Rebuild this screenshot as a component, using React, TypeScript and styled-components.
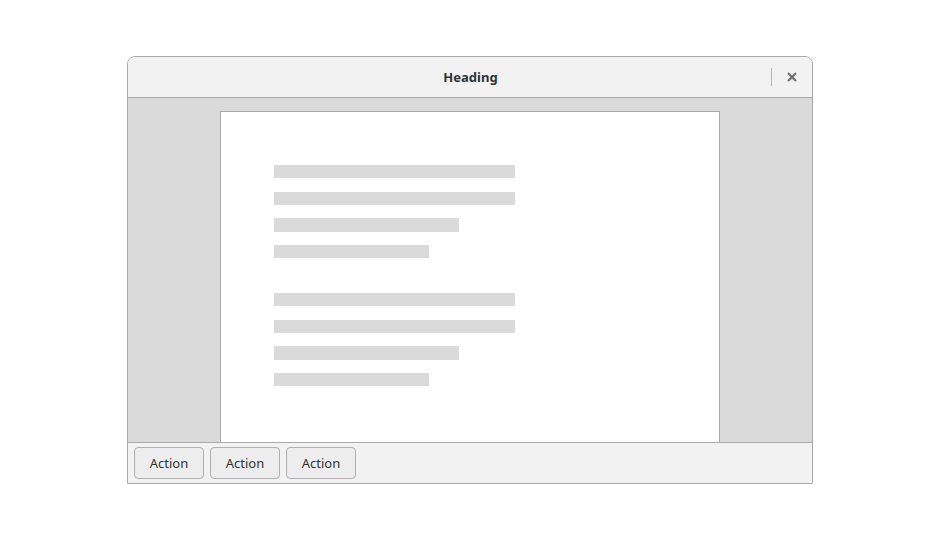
import React from "react";
import styled, { createGlobalStyle } from "styled-components";

const Global = createGlobalStyle`
  html, body { margin: 0; padding: 0; background: #ffffff; }
  body { font-family: "Noto Sans", "Open Sans", sans-serif; }
`;

const Page = styled.div`
  width: 940px;
  height: 540px;
  padding: 56px 0 0 127px;
  box-sizing: border-box;
`;

const Window = styled.div`
  width: 686px;
  height: 428px;
  box-sizing: border-box;
  border: 1px solid #a9a9a9;
  border-radius: 8px 8px 0 0;
  display: flex;
  flex-direction: column;
  overflow: hidden;
`;

const HeaderBar = styled.div`
  height: 40px;
  flex: none;
  background: #f2f2f2;
  border-bottom: 1px solid #a9a9a9;
  position: relative;
  display: flex;
  align-items: center;
  justify-content: center;
`;

const Title = styled.div`
  font-size: 13px;
  font-weight: 700;
  color: #2e3436;
  padding-left: 1px;
`;

const Controls = styled.div`
  position: absolute;
  right: 0;
  top: 0;
  height: 40px;
  display: flex;
  align-items: center;
`;

const Separator = styled.div`
  width: 1px;
  height: 18px;
  background: #b5b5b5;
  margin-right: 13px;
`;

const CloseButton = styled.div`
  width: 14px;
  height: 14px;
  margin-right: 13px;
  display: flex;
  align-items: center;
  justify-content: center;
`;

const Content = styled.div`
  flex: 1;
  background: #dadada;
  display: flex;
  justify-content: center;
  padding-top: 13px;
  overflow: hidden;
`;

const Paper = styled.div`
  width: 500px;
  box-sizing: border-box;
  background: #ffffff;
  border: 1px solid #a9a9a9;
  border-bottom: none;
  padding: 53px 0 0 53px;
  display: flex;
  flex-direction: column;
  gap: 34.67px;
`;

const Paragraph = styled.div`
  display: flex;
  flex-direction: column;
  gap: 13.33px;
`;

const Line = styled.div<{ $w: number }>`
  width: ${(p) => p.$w}px;
  height: 13.33px;
  background: #dadada;
`;

const Footer = styled.div`
  height: 41px;
  flex: none;
  box-sizing: border-box;
  background: #f2f2f2;
  border-top: 1px solid #a9a9a9;
  padding: 4px 6px;
  display: flex;
  gap: 6px;
`;

const Button = styled.button`
  width: 70px;
  height: 32px;
  box-sizing: border-box;
  border: 1px solid #b0b0b0;
  border-radius: 4px;
  background: #ededed;
  font-family: "Noto Sans", "Open Sans", sans-serif;
  font-size: 13px;
  color: #2e3436;
  padding: 0;
`;

const widths = [241, 241, 185, 155];

export default function App() {
  return (
    <>
      <Global />
      <Page>
        <Window>
          <HeaderBar>
            <Title>Heading</Title>
            <Controls>
              <Separator />
              <CloseButton>
                <svg width="10" height="10" viewBox="0 0 10 10">
                  <path d="M1 1 L9 9 M9 1 L1 9" stroke="#6b6b6b" strokeWidth="2" />
                </svg>
              </CloseButton>
            </Controls>
          </HeaderBar>
          <Content>
            <Paper>
              {[0, 1].map((p) => (
                <Paragraph key={p}>
                  {widths.map((w, i) => (
                    <Line key={i} $w={w} />
                  ))}
                </Paragraph>
              ))}
            </Paper>
          </Content>
          <Footer>
            <Button>Action</Button>
            <Button>Action</Button>
            <Button>Action</Button>
          </Footer>
        </Window>
      </Page>
    </>
  );
}
